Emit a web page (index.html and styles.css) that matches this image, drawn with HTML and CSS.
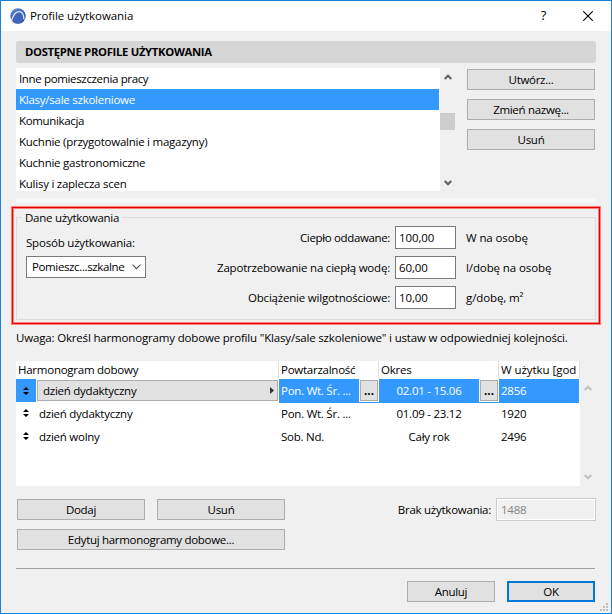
FILE: index.html
```html
<!DOCTYPE html>
<html lang="pl">
<head>
<meta charset="utf-8">
<title>Profile użytkowania</title>
<link rel="stylesheet" href="styles.css">
</head>
<body>
<div class="window">
  <header class="titlebar">
    <svg class="logo" width="16" height="16" viewBox="0 0 16 16">
      <defs><linearGradient id="g" x1="0" y1="0" x2="0.6" y2="1"><stop offset="0" stop-color="#5c92d8"/><stop offset="1" stop-color="#1f3f9c"/></linearGradient></defs>
      <circle cx="8" cy="8" r="7.7" fill="url(#g)"/>
      <path d="M2.8 13.8C4 8.5 6.5 4.8 9.3 4.8C12 4.8 12.8 8 13 12.5C10.5 16 6 16.3 2.8 13.8z" fill="#3d66b8"/>
      <path d="M1.6 12.7C3.2 7 6.2 3.7 9.3 3.7C12.5 3.7 13.7 7 14 11.5" fill="none" stroke="#dce7f6" stroke-width="1.3"/>
    </svg>
    <h1 class="title">Profile użytkowania</h1>
    <span class="help">?</span>
    <svg class="close" width="10" height="10" viewBox="0 0 10 10"><path d="M0.3 0.3L9.7 9.7M9.7 0.3L0.3 9.7" stroke="#000" stroke-width="1.1"/></svg>
  </header>
  <main class="content">
    <h2 class="section">DOSTĘPNE PROFILE UŻYTKOWANIA</h2>
    <div class="profiles">
      <ul class="list">
        <li class="snug">Inne pomieszczenia pracy</li>
        <li class="selected">Klasy/sale szkoleniowe</li>
        <li class="snug">Komunikacja</li>
        <li>Kuchnie (przygotowalnie i magazyny)</li>
        <li>Kuchnie gastronomiczne</li>
        <li>Kulisy i zaplecza scen</li>
      </ul>
      <div class="scrollbar">
        <svg width="8" height="6" viewBox="0 0 8 6"><path d="M0.7 5L4 1.7L7.3 5" fill="none" stroke="#606060" stroke-width="2"/></svg>
        <div class="thumb"></div>
        <svg class="down" width="8" height="6" viewBox="0 0 8 6"><path d="M0.7 1L4 4.3L7.3 1" fill="none" stroke="#606060" stroke-width="2"/></svg>
      </div>
      <div class="actions">
        <button>Utwórz...</button>
        <button>Zmień nazwę...</button>
        <button>Usuń</button>
      </div>
    </div>
    <div class="strip"></div>
    <div class="highlight">
      <section class="group">
        <h3 class="legend">Dane użytkowania</h3>
        <div class="usage">
          <span class="usage-label">Sposób użytkowania:</span>
          <div class="select"><span>Pomieszc...szkalne</span><svg width="9" height="6" viewBox="0 0 9 6"><path d="M0.5 0.7L4.5 4.7L8.5 0.7" fill="none" stroke="#505050" stroke-width="1.1"/></svg></div>
        </div>
        <div class="fields">
          <span class="label snug">Ciepło oddawane:</span><span class="input">100,00</span><span class="unit">W na osobę</span>
          <span class="label">Zapotrzebowanie na ciepłą wodę:</span><span class="input">60,00</span><span class="unit">l/dobę na osobę</span>
          <span class="label">Obciążenie wilgotnościowe:</span><span class="input">10,00</span><span class="unit">g/dobę, m²</span>
        </div>
      </section>
    </div>
    <p class="note">Uwaga: Określ harmonogramy dobowe profilu "Klasy/sale szkoleniowe" i ustaw w odpowiedniej kolejności.</p>
    <div class="schedule">
      <div class="table">
        <div class="row head"><span class="first">Harmonogram dobowy</span><span>Powtarzalność</span><span>Okres</span><span class="open">W użytku [god</span></div>
        <div class="row current">
          <div class="name"><i class="sort"><svg width="6" height="8" viewBox="0 0 6 8"><path d="M0 3L3 0L6 3zM0 5L3 8L6 5z"/></svg></i><div class="pop"><span>dzień dydaktyczny</span><svg width="4" height="7" viewBox="0 0 4 7"><path d="M0 0L4 3.5L0 7z" fill="#333"/></svg></div></div>
          <div class="cell"><span>Pon. Wt. Śr. ...</span><b class="more">...</b></div>
          <div class="cell period"><span>02.01 - 15.06</span><b class="more">...</b></div>
          <div class="cell"><span>2856</span></div>
        </div>
        <div class="row">
          <div class="name"><i class="sort"><svg width="6" height="8" viewBox="0 0 6 8"><path d="M0 3L3 0L6 3zM0 5L3 8L6 5z"/></svg></i><span class="plain">dzień dydaktyczny</span></div>
          <div class="cell"><span>Pon. Wt. Śr. ...</span></div>
          <div class="cell period"><span>01.09 - 23.12</span></div>
          <div class="cell"><span>1920</span></div>
        </div>
        <div class="row">
          <div class="name"><i class="sort"><svg width="6" height="8" viewBox="0 0 6 8"><path d="M0 3L3 0L6 3zM0 5L3 8L6 5z"/></svg></i><span class="plain">dzień wolny</span></div>
          <div class="cell"><span>Sob. Nd.</span></div>
          <div class="cell period"><span>Cały rok</span></div>
          <div class="cell"><span>2496</span></div>
        </div>
      </div>
      <div class="table-scroll">
        <svg width="8" height="6" viewBox="0 0 8 6"><path d="M0.7 5L4 1.7L7.3 5" fill="none" stroke="#bfbfbf" stroke-width="2"/></svg>
        <svg width="8" height="6" viewBox="0 0 8 6"><path d="M0.7 1L4 4.3L7.3 1" fill="none" stroke="#bfbfbf" stroke-width="2"/></svg>
      </div>
    </div>
    <div class="tools">
      <div class="tool-buttons">
        <button>Dodaj</button>
        <button>Usuń</button>
        <button class="wide">Edytuj harmonogramy dobowe...</button>
      </div>
      <div class="unused"><span>Brak użytkowania:</span><span class="disabled">1488</span></div>
    </div>
    <footer class="footer">
      <button>Anuluj</button>
      <button class="primary">OK</button>
    </footer>
  </main>
  <svg class="grip" width="8" height="8" viewBox="0 0 8 8"><path d="M6 0h2v2h-2zM3 3h2v2h-2zM6 3h2v2h-2zM0 6h2v2h-2zM3 6h2v2h-2zM6 6h2v2h-2z" fill="#bfbfbf"/></svg>
</div>
</body>
</html>
```
FILE: styles.css
```css
* { box-sizing: border-box; margin: 0; padding: 0; }
body { font: 11.5px/16px "Open Sans", "Noto Sans", sans-serif; letter-spacing: -0.25px; color: #000; }
svg { display: block; flex: none; }
span, button { white-space: nowrap; }
.window { position: relative; width: 612px; height: 614px; border: 1px solid #1883d7; background: #f0f0f0; overflow: hidden; }
.titlebar { display: flex; align-items: center; height: 30px; background: #fff; padding: 0 18px 0 9px; }
.title { font-size: 11.5px; letter-spacing: -0.07px; font-weight: 400; margin-left: 4px; flex: 1; line-height: 16px; }
.help { font-size: 13px; margin-right: 37px; line-height: 16px; padding-bottom: 2px; }
.content { padding: 10px 15px 0; }
.section { height: 22px; line-height: 22px; padding-left: 9px; background: #d6d6d6; border-radius: 3px; font-size: 11.3px; font-weight: 700; letter-spacing: -0.32px; }
button { font: inherit; letter-spacing: -0.3px; height: 21px; line-height: 20px; background: #e1e1e1; border: 1px solid #adadad; border-radius: 0; color: #000; text-align: center; }
.profiles { display: flex; height: 123px; margin-top: 5px; }
.list { width: 424px; background: #fff; list-style: none; padding-right: 1px; overflow: hidden; }
.list li { height: 21px; line-height: 21px; padding-left: 3px; }
.list .selected { background: #3399ff; color: #fff; }
.snug { letter-spacing: -0.35px; }
.open { letter-spacing: -0.05px; }
.scrollbar { width: 15px; display: flex; flex-direction: column; align-items: center; padding-top: 6px; }
.thumb { width: 15px; height: 17px; background: #cdcdcd; margin-top: 33px; }
.down { margin-top: 50px; }
.actions { width: 128px; margin: 1px 0 0 12px; display: flex; flex-direction: column; gap: 9px; }
.strip { height: 5px; margin-top: 7px; background: #f7f7f7; }
.highlight { height: 119px; margin: 3px -5px 0; border: 1px solid #ff7f7f; box-shadow: inset 0 0 0 1px #e80000, inset 0 0 0 2px #ff7f7f; padding: 10px 4px 0; }
.group { position: relative; height: 103px; border: 1px solid #dcdcdc; display: flex; }
.legend { position: absolute; left: 5px; top: -8px; padding: 0 3px; background: #f0f0f0; font-size: 11.5px; font-weight: 400; }
.usage { width: 130px; padding: 17px 0 0 9px; }
.usage-label { display: block; height: 21px; letter-spacing: -0.2px; }
.select { width: 120px; height: 22px; border: 1px solid #7a7a7a; background: #fff; display: flex; align-items: center; justify-content: space-between; padding: 0 4px 0 5px; letter-spacing: -0.37px; }
.fields { display: grid; grid-template-columns: 248px 61px 1fr; grid-auto-rows: 23px; row-gap: 7px; padding-top: 8px; line-height: 24px; }
.label { text-align: right; padding-right: 5px; }
.label:not(.snug) { letter-spacing: -0.2px; }
.input { border: 1px solid #7a7a7a; background: #fff; line-height: 22px; padding-left: 3px; letter-spacing: -0.1px; }
.unit { padding-left: 10px; letter-spacing: -0.1px; }
.note { margin-top: 5px; height: 16px; white-space: nowrap; letter-spacing: -0.17px; }
.schedule { display: flex; height: 125px; margin-top: 15px; }
.table { width: 564px; background: #fff; }
.row { display: grid; grid-template-columns: 263px 100px 120px 81px; height: 23px; line-height: 24px; }
.head { height: 18px; line-height: 18px; }
.head span { border-right: 1px solid #e0e0e0; padding-left: 2px; overflow: hidden; }
.name, .cell { display: flex; }
.cell { padding-left: 2px; }
.sort { width: 20px; height: 22px; display: flex; align-items: center; justify-content: center; }
.plain { padding-left: 3px; }
.period > span { width: 100px; text-align: center; margin-left: -2px; }
.current .sort { height: 23px; background: #3399ff; }
.current .cell { position: relative; background: #3399ff; color: #fff; }
.current .cell:last-child { margin-right: 1px; }
.pop { width: 241px; height: 21px; margin: 1px 0 0 1px; border: 1px solid #adadad; background: #e1e1e1; line-height: 19px; display: flex; align-items: center; justify-content: space-between; padding: 0 3px 0 5px; }
.more { position: absolute; right: 1px; top: 1px; width: 18px; height: 21px; border: 1px solid #adadad; background: #e1e1e1; box-shadow: 0 0 0 1px #fff; color: #000; line-height: 19px; text-align: center; letter-spacing: 0; }
.table-scroll { width: 15px; padding: 24px 0 6px; display: flex; flex-direction: column; justify-content: space-between; align-items: center; }
.tools { display: flex; justify-content: space-between; padding: 13px 0 0 1px; }
.tool-buttons { display: grid; grid-template-columns: 128px 128px; gap: 9px 12px; }
.wide { grid-column: 1 / 3; }
.unused { display: flex; gap: 5px; margin-top: -1px; height: 23px; line-height: 24px; }
.disabled { width: 100px; border: 1px solid #ccc; box-shadow: inset 0 0 0 1px #fff; line-height: 22px; padding-left: 4px; color: #838383; }
.footer { margin: 18px 1px 0 0; border-top: 1px solid #a0a0a0; padding-top: 12px; display: flex; justify-content: flex-end; gap: 12px; }
.footer button { width: 88px; }
.footer .primary { border: 2px solid #0078d7; line-height: 18px; }
.grip { position: absolute; right: 3px; bottom: 2px; }
```
